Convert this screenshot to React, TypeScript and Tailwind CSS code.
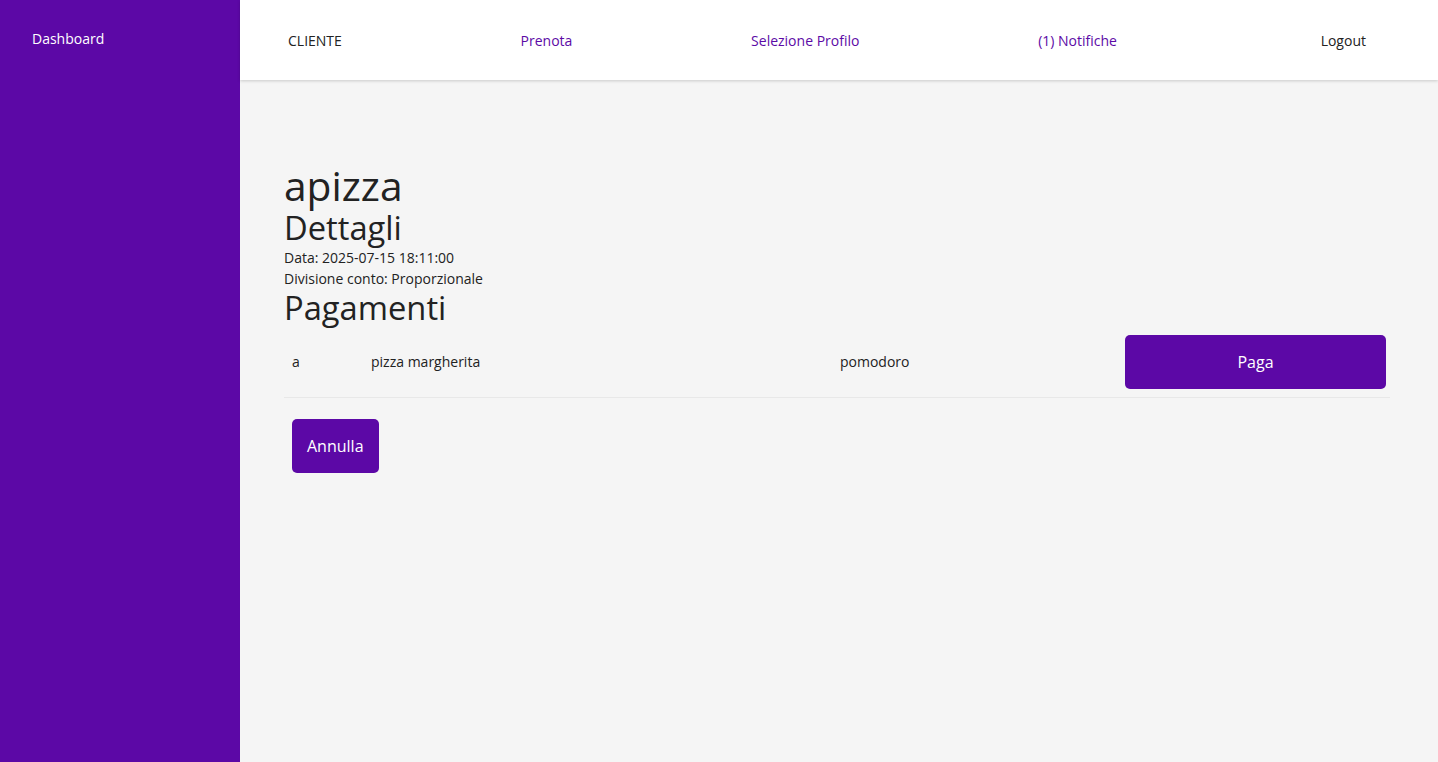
type NavLinkProps = {
  text: string;
  isLink?: boolean;
  className?: string;
};

type PaymentRowProps = {
  user: string;
  dish: string;
  ingredient: string;
};

function NavLink({ text, isLink, className }: NavLinkProps) {
  return (
    <a
      href="#"
      className={`text-sm ${isLink ? "text-[#5c0aa6]" : "text-[#222222]"} ${
        className ?? ""
      }`}
    >
      {text}
    </a>
  );
}

function Sidebar() {
  return (
    <aside className="w-[240px] shrink-0 bg-[#5c08a6] px-8 pt-[26px] min-h-[762px]">
      <a href="#" className="text-sm text-white">
        Dashboard
      </a>
    </aside>
  );
}

function Header() {
  return (
    <header className="relative z-10 flex h-20 items-center justify-between bg-white pt-0.5 pl-12 pr-[72px] shadow-[0_1px_3px_rgba(0,0,0,0.18)]">
      <NavLink text="CLIENTE" />
      <NavLink text="Prenota" isLink />
      <NavLink text="Selezione Profilo" isLink />
      <NavLink text="(1) Notifiche" isLink />
      <NavLink text="Logout" className="ml-[25px]" />
    </header>
  );
}

function PaymentRow({ user, dish, ingredient }: PaymentRowProps) {
  return (
    <div className="grid grid-cols-[79px_469px_285px_1fr] items-center border-b border-[#e8e8e8] text-sm text-[#222222]">
      <div className="p-2">{user}</div>
      <div className="p-2">{dish}</div>
      <div className="p-2">{ingredient}</div>
      <div className="py-2 pl-2 pr-1">
        <button className="h-[54px] w-full rounded-[5px] bg-[#5c08a6] text-base text-white">
          Paga
        </button>
      </div>
    </div>
  );
}

export default function App() {
  return (
    <div
      className="flex min-h-[762px] bg-[#f5f5f5]"
      style={{ fontFamily: '"Open Sans", "Noto Sans", sans-serif' }}
    >
      <Sidebar />
      <div className="flex-1">
        <Header />
        <main className="pl-11 pr-12 pt-[81px] text-[#222222]">
          <h1 className="text-[40.7px] leading-[48px]">apizza</h1>
          <h2 className="text-[32.7px] leading-[38px]">Dettagli</h2>
          <p className="text-sm leading-[21px]">Data: 2025-07-15 18:11:00</p>
          <p className="text-sm leading-[21px]">
            Divisione conto: Proporzionale
          </p>
          <h2 className="text-[32.7px] leading-[38px]">Pagamenti</h2>
          <PaymentRow user="a" dish="pizza margherita" ingredient="pomodoro" />
          <div className="px-2 pt-[21px]">
            <button className="h-[54px] rounded-[5px] bg-[#5c08a6] px-[15px] text-base text-white">
              Annulla
            </button>
          </div>
        </main>
      </div>
    </div>
  );
}
